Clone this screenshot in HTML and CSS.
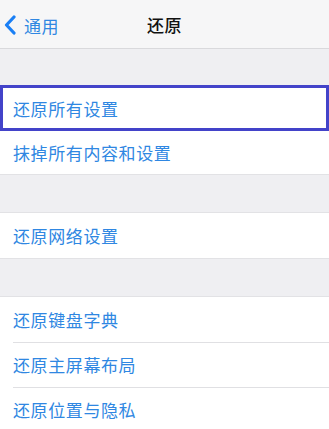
FILE: index.html
```html
<!DOCTYPE html>
<html lang="zh">
<head>
    <meta charset="UTF-8">
    <meta name="viewport" content="width=device-width, initial-scale=1.0">
    <title>还原</title>
    <link rel="stylesheet" href="styles.css">
</head>
<body>
    <header class="nav-bar">
        <a class="back-link" href="#">
            <svg class="back-icon" width="12" height="20" viewBox="0 0 12 20">
                <polyline points="10,2 2.5,10 10,18" fill="none" stroke="#1a7ff5" stroke-width="3.2" stroke-linecap="round" stroke-linejoin="round"/>
            </svg>
            <span>通用</span>
        </a>
        <h1 class="nav-title">还原</h1>
    </header>

    <div class="group group-first">
        <a class="row row-selected" href="#">还原所有设置</a>
        <a class="row" href="#">抹掉所有内容和设置</a>
    </div>

    <div class="group">
        <a class="row" href="#">还原网络设置</a>
    </div>

    <div class="group">
        <a class="row" href="#">还原键盘字典</a>
        <a class="row" href="#">还原主屏幕布局</a>
        <a class="row" href="#">还原位置与隐私</a>
    </div>
</body>
</html>
```

FILE: styles.css
```css
* {
    margin: 0;
    padding: 0;
    box-sizing: border-box;
    font-family: 'Noto Sans CJK SC', 'Noto Sans', sans-serif;
}

body {
    width: 329px;
    height: 429px;
    overflow: hidden;
    background: #efeff2;
}

.nav-bar {
    height: 49px;
    background: #f6f6f7;
    border-bottom: 1px solid #d9d9dc;
    display: flex;
    align-items: center;
    justify-content: center;
    position: relative;
}

.back-link {
    position: absolute;
    left: 4px;
    top: 0;
    height: 50px;
    display: flex;
    align-items: center;
    gap: 8px;
    color: #2f87e2;
    text-decoration: none;
    font-size: 17px;
    letter-spacing: 0.6px;
}

.nav-title {
    font-size: 17px;
    font-weight: 500;
    color: #111;
    letter-spacing: 0.6px;
}

.group {
    margin-top: 37px;
    background: #fff;
    border-top: 1px solid #e2e2e5;
    border-bottom: 1px solid #e2e2e5;
}

.group-first {
    margin-top: 36px;
    border-top: none;
}

.row {
    display: flex;
    align-items: center;
    height: 45px;
    padding-left: 13px;
    color: #2f87e2;
    font-size: 17px;
    letter-spacing: 0.6px;
    text-decoration: none;
    position: relative;
}

.row + .row::before {
    content: '';
    position: absolute;
    top: 0;
    left: 13px;
    right: 0;
    height: 1px;
    background: #e0e0e3;
}

.row-selected {
    height: 46px;
    padding-left: 10px;
    border: 3px solid #4343c9;
}

.row-selected + .row {
    height: 43px;
}

.row-selected + .row::before {
    display: none;
}
```
